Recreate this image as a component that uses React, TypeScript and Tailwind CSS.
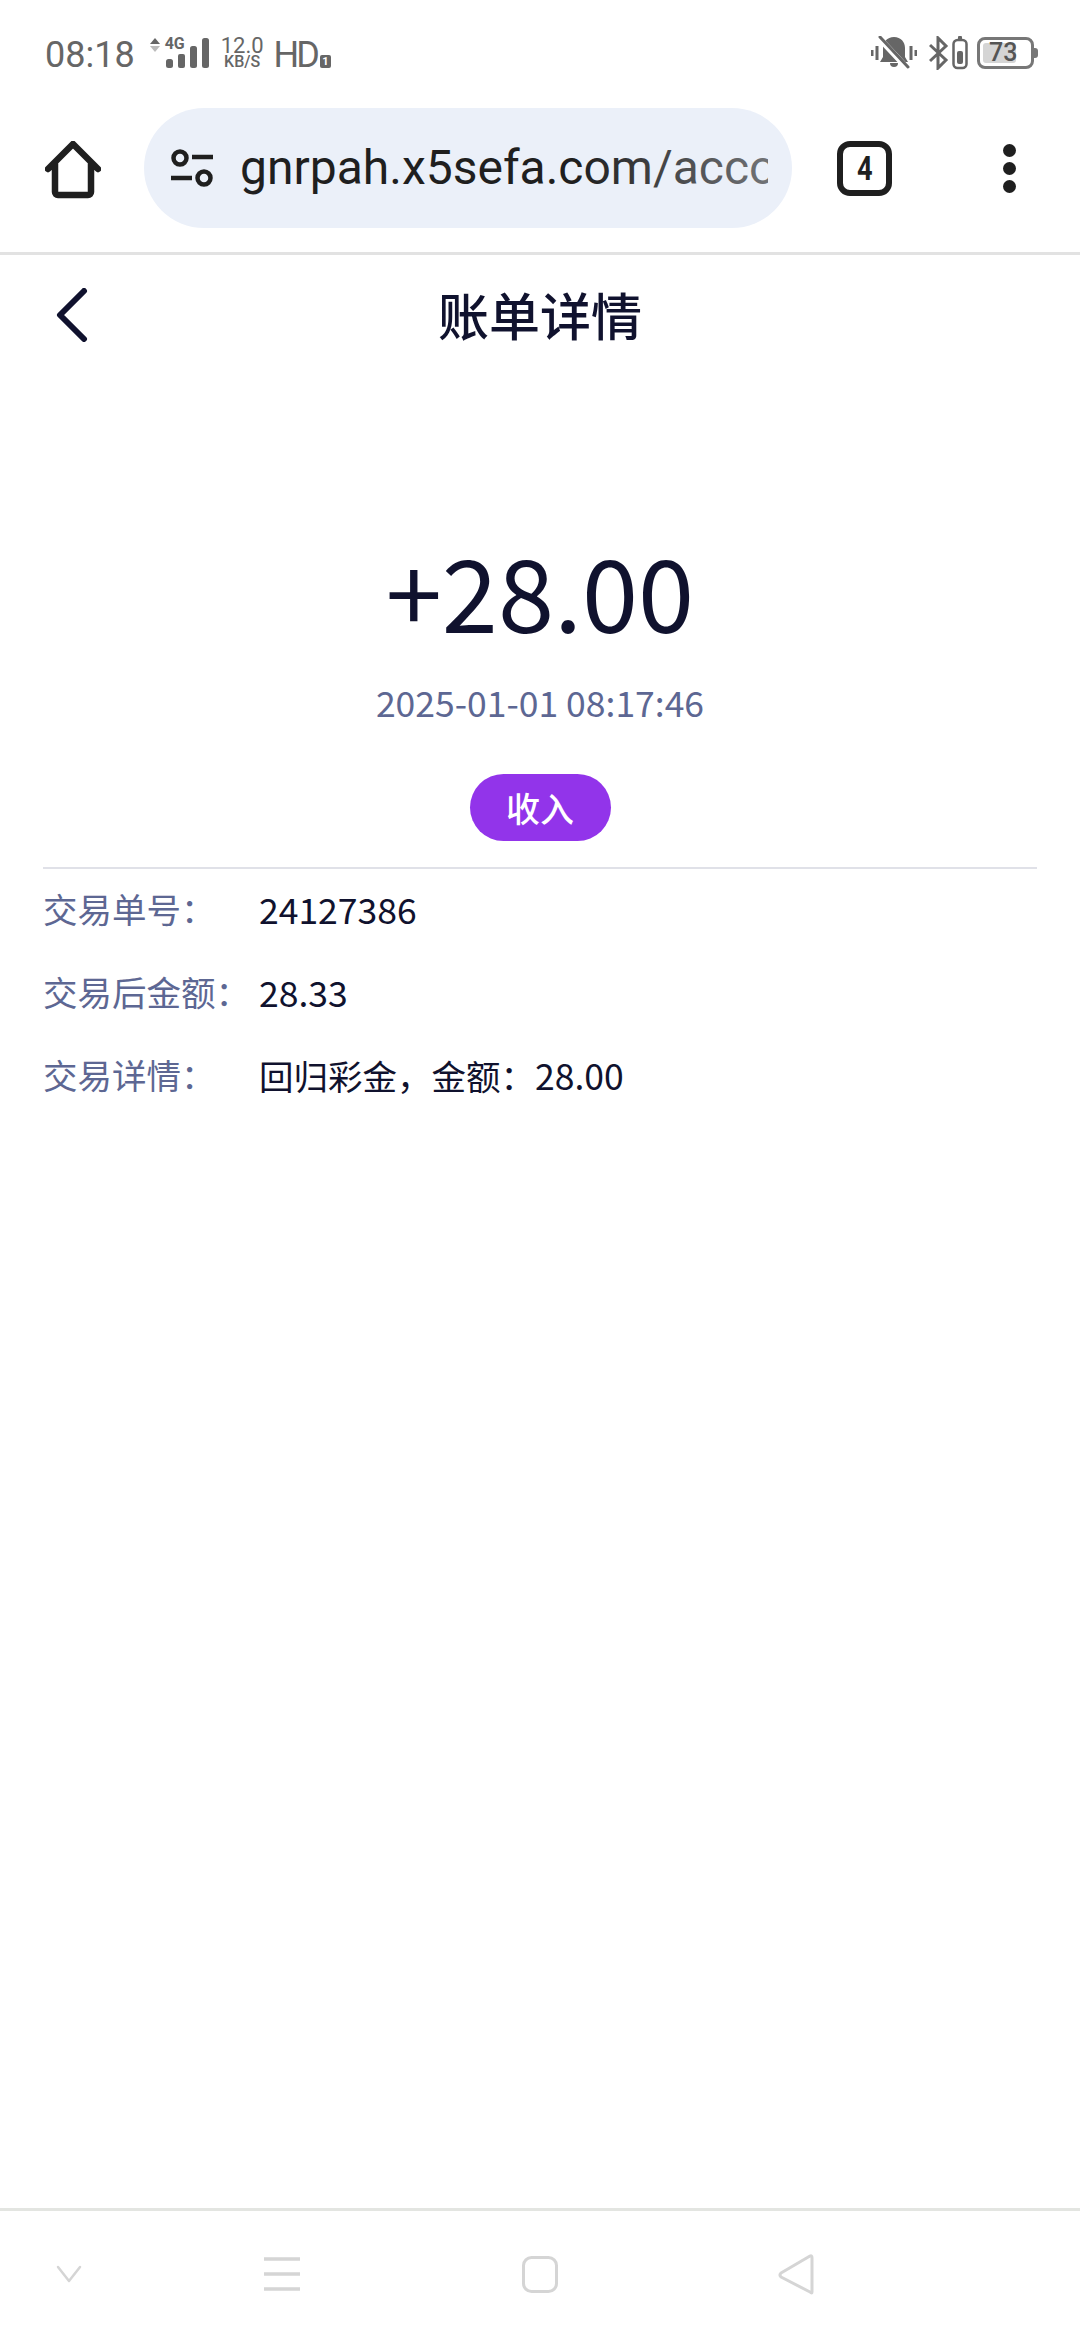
import type { ReactNode } from "react"

const cjk = "font-['Noto_Sans_CJK_SC','Noto_Sans',sans-serif]"

function SignalIcon() {
  return (
    <svg width="60" height="34" viewBox="0 0 60 34" className="block">
      <path d="M0 6 5 0l5 6z" fill="#666" />
      <path d="M0 8h10l-5 6z" fill="#bbb" />
      <rect x="16" y="21" width="7" height="9" rx="2.5" fill="#666" />
      <rect x="28" y="16" width="7" height="14" rx="2" fill="#666" />
      <rect x="40" y="8" width="7" height="22" rx="2.5" fill="#666" />
      <rect x="52" y="0" width="7" height="30" rx="2.5" fill="#666" />
    </svg>
  )
}

function BellOff() {
  return (
    <svg width="46" height="34" viewBox="0 0 46 34" className="block">
      <path d="M23 1c7 0 11 5 11 11v9l3 5H9l3-5v-9C12 6 16 1 23 1z" fill="#666" />
      <path d="M19 27h8a4 4 0 0 1-8 0z" fill="#666" />
      <path d="M8 2 37 33" stroke="#fff" strokeWidth="6" />
      <path d="M9 1 37 31" stroke="#666" strokeWidth="3" strokeLinecap="round" />
      <path d="M1 14v6M6 10v14M40 10v14M45 14v6" stroke="#666" strokeWidth="3" />
    </svg>
  )
}

function BluetoothBattery() {
  return (
    <svg width="40" height="34" viewBox="0 0 40 34" className="block">
      <path d="M1 9 17 24l-8 8V2l8 8L1 25" fill="none" stroke="#666" strokeWidth="3" />
      <rect x="24.5" y="4" width="13" height="28" rx="4" fill="none" stroke="#666" strokeWidth="2.5" />
      <rect x="29" y="0" width="4" height="4" rx="1" fill="#666" />
      <rect x="28" y="15" width="6" height="13" rx="2" fill="#666" />
    </svg>
  )
}

function HomeIcon() {
  return (
    <svg width="56" height="58" viewBox="0 0 56 58" className="block">
      <path d="M3 28 28 3l25 25M10 23v28a3 3 0 0 0 3 3h30a3 3 0 0 0 3-3V23" fill="none" stroke="#1f1f1f" strokeWidth="6.5" strokeLinecap="round" strokeLinejoin="round" />
    </svg>
  )
}

function TuneIcon() {
  return (
    <svg width="44" height="38" viewBox="0 0 44 38" className="block">
      <circle cx="10" cy="9" r="6.5" fill="none" stroke="#1f1f1f" strokeWidth="4.5" />
      <path d="M22 8h21M1 29h21" stroke="#1f1f1f" strokeWidth="4.5" />
      <circle cx="34" cy="29" r="6.5" fill="none" stroke="#1f1f1f" strokeWidth="4.5" />
    </svg>
  )
}

function Row({ label, value }: { label: string; value: ReactNode }) {
  return (
    <div className="flex h-[83px] items-center pb-[4px]">
      <span className="w-[216px] text-[34.5px] text-[#5d6793]">{label}</span>
      <span className="text-[35.5px] text-[#10122e]">{value}</span>
    </div>
  )
}

export default function App() {
  return (
    <div className={`flex h-[2340px] w-[1080px] flex-col overflow-hidden bg-white ${cjk}`}>
      {/* status bar */}
      <div className="flex h-[108px] shrink-0 items-start justify-between pl-[45px] pr-[46px] pt-[36px] font-['Roboto',sans-serif] text-[#666]">
        <div className="flex items-start">
          <span className="text-[36px] leading-[38px]">08:18</span>
          <div className="relative ml-[15px] mt-[2px]">
            <SignalIcon />
            <span className="absolute left-[15px] top-[-1px] text-[16px] font-bold leading-[14px]">4G</span>
          </div>
          <div className="ml-[11px] flex flex-col items-center leading-none">
            <span className="text-[22px] leading-[19px]">12.0</span>
            <span className="text-[16px] font-medium leading-[14px]">KB/S</span>
          </div>
          <span className="ml-[10px] mt-[1px] text-[36px] leading-[36px] tracking-[-3px]">HD</span>
          <span className="ml-[3px] mt-[19px] flex h-[13px] w-[11px] items-center justify-center rounded-[2px] bg-[#666] text-[11px] font-bold leading-none text-white">1</span>
        </div>
        <div className="flex items-start">
          <BellOff />
          <div className="ml-[12px]">
            <BluetoothBattery />
          </div>
          <div className="relative ml-[8px] mt-[1px] h-[32px] w-[57px] rounded-[8px] border-[3px] border-[#777]">
            <div className="absolute left-[3px] top-[3px] h-[20px] w-[33px] rounded-[3px] bg-[#d5d5d5]" />
            <span className="absolute left-[9px] top-[1px] text-[25px] font-medium leading-[24px] text-[#555]">73</span>
            <div className="absolute right-[-7px] top-[8px] h-[10px] w-[4px] rounded-r-[3px] bg-[#777]" />
          </div>
        </div>
      </div>

      {/* browser toolbar */}
      <div className="flex h-[147px] shrink-0 items-start border-b-[3px] border-[#e2e2e2]">
        <div className="ml-[45px] mt-[33px]">
          <HomeIcon />
        </div>
        <div className="ml-[43px] flex h-[120px] w-[648px] items-center rounded-[60px] bg-[#ebf0f9] pl-[26px]">
          <TuneIcon />
          <div className="relative ml-[26px] w-[528px] overflow-hidden">
            <span className="whitespace-nowrap font-['Roboto',sans-serif] text-[48px] leading-[60px] text-[#1f1f1f]">gnrpah.x5sefa.com/account</span>
            <div className="absolute inset-y-0 right-0 w-[190px] bg-gradient-to-r from-[#ebf0f9]/0 to-[#ebf0f9]/40" />
          </div>
        </div>
        <div className="ml-[45px] mt-[33px] flex h-[55px] w-[55px] items-center justify-center rounded-[13px] border-[6px] border-[#1f1f1f] font-['Roboto',sans-serif] text-[34px] font-bold text-[#1f1f1f]">
          <span className="inline-block scale-x-[0.8]">4</span>
        </div>
        <div className="ml-[111px] mt-[36px] flex flex-col gap-[5px]">
          <div className="h-[13px] w-[13px] rounded-full bg-[#1f1f1f]" />
          <div className="h-[13px] w-[13px] rounded-full bg-[#1f1f1f]" />
          <div className="h-[13px] w-[13px] rounded-full bg-[#1f1f1f]" />
        </div>
      </div>

      {/* page header */}
      <div className="relative flex h-[120px] shrink-0 items-center justify-center">
        <svg width="34" height="54" viewBox="0 0 34 54" className="absolute left-[55px] top-[33px]">
          <path d="M29 3 5 27l24 24" fill="none" stroke="#10122e" strokeWidth="6" strokeLinecap="round" strokeLinejoin="round" />
        </svg>
        <span className="mb-[2px] text-[51px] font-medium leading-[60px] text-[#10122e]">账单详情</span>
      </div>

      {/* amount */}
      <div className="flex shrink-0 flex-col items-center pt-[154px]">
        <span className="text-[101px] leading-[120px] text-[#10122e]">+28.00</span>
        <span className="mt-[27px] text-[35.5px] leading-[52px] text-[#5d6793]">2025-01-01 08:17:46</span>
        <span className="mt-[46px] flex h-[67px] w-[141px] items-center justify-center rounded-[34px] bg-[#9234ea] text-[34px] font-medium text-white">收入</span>
      </div>

      {/* details */}
      <div className="mx-[43px] mt-[26px] shrink-0 border-t-2 border-[#e0e1e8]">
        <Row label="交易单号：" value="24127386" />
        <Row label="交易后金额：" value="28.33" />
        <Row label="交易详情：" value={<><span className="text-[34.5px]">回归彩金，金额：</span>28.00</>} />
      </div>

      <div className="flex-1" />

      {/* nav bar */}
      <div className="relative h-[132px] shrink-0 border-t-[3px] border-[#e3e5e1]">
        <svg width="1080" height="129" viewBox="0 2211 1080 129" className="block">
          <path d="M58 2267l11 14 11-14" fill="none" stroke="#d5d5d5" strokeWidth="2.5" strokeLinecap="round" strokeLinejoin="round" />
          <path d="M264 2259h36M264 2274h36M264 2289h36" stroke="#d5d5d5" strokeWidth="3.5" />
          <rect x="523.5" y="2257.5" width="33" height="34" rx="8" fill="none" stroke="#d5d5d5" strokeWidth="3" />
          <path d="M812 2258v34q0 2-2 0l-29-15q-2-2 0-4l29-17q2-1 2 2z" fill="none" stroke="#d5d5d5" strokeWidth="3" strokeLinejoin="round" />
        </svg>
      </div>
    </div>
  )
}
